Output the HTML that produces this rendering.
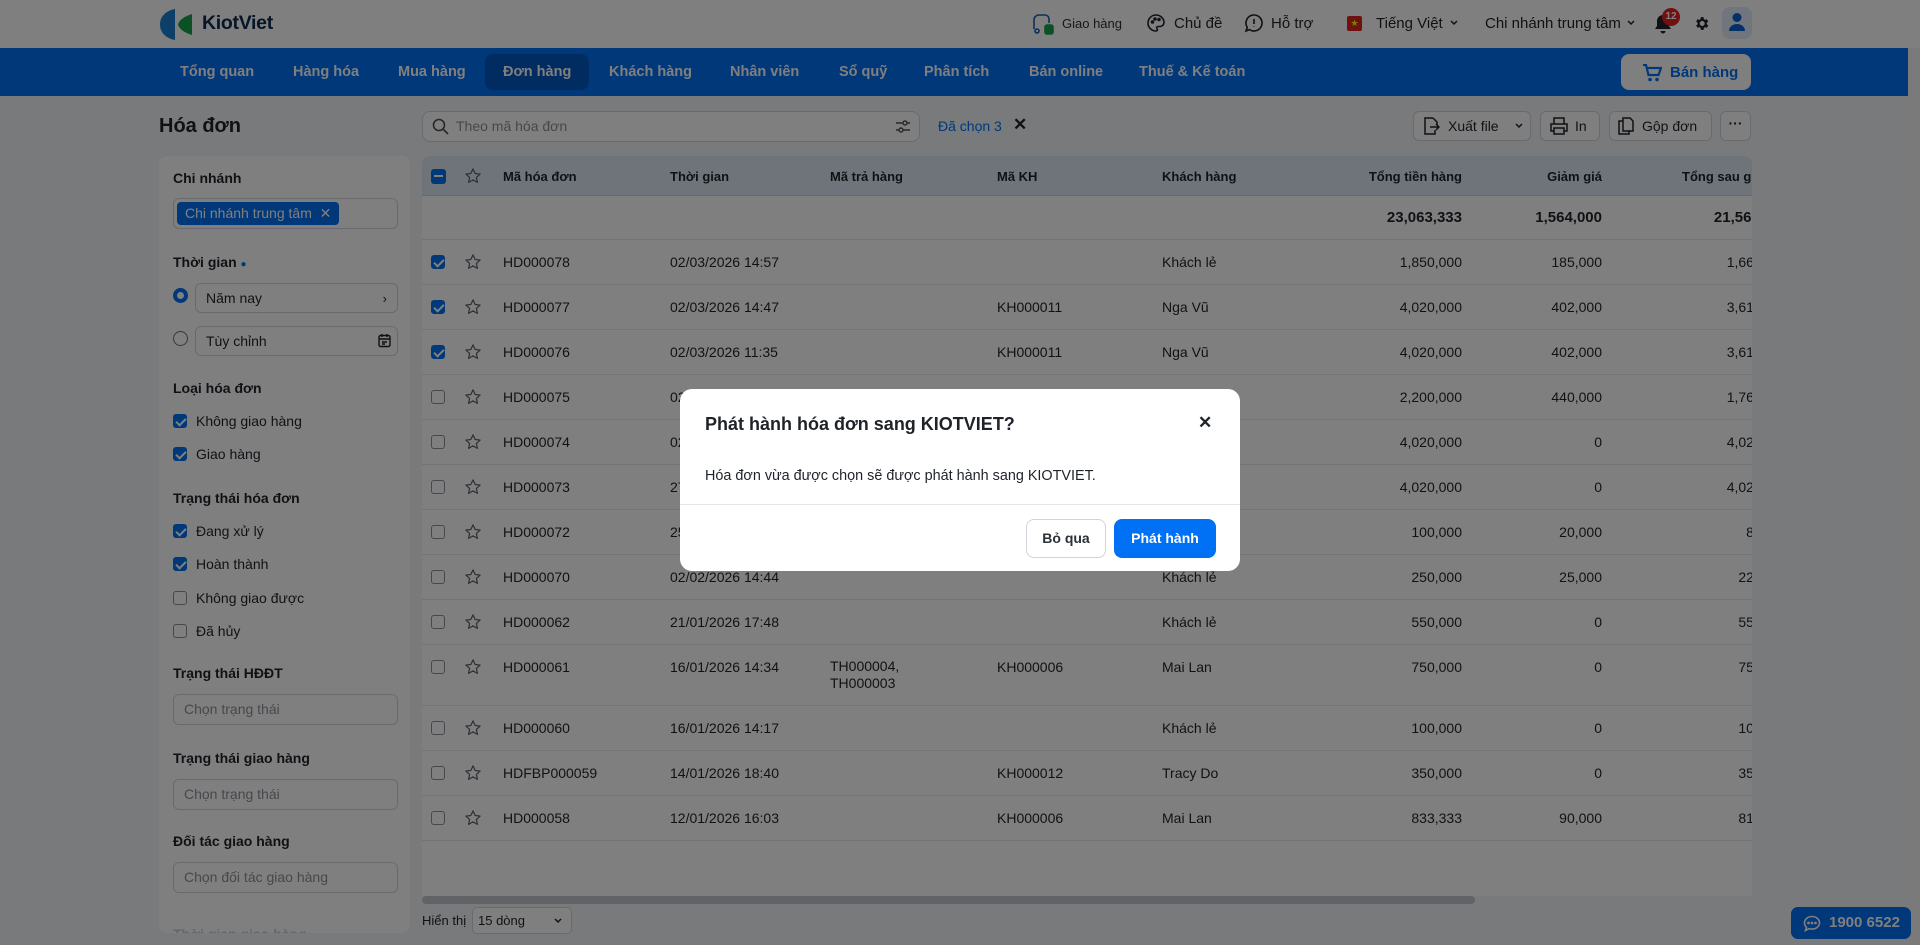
<!DOCTYPE html>
<html><head><meta charset="utf-8">
<style>
*{box-sizing:border-box;margin:0;padding:0}
body{width:1920px;height:945px;overflow:hidden;background:#f3f4f6;font-family:"Liberation Sans",sans-serif;color:#1f2329;position:relative}
.a{position:absolute;white-space:nowrap}
.top{position:absolute;left:0;top:0;width:1920px;height:48px;background:#fff}
.nav{position:absolute;left:0;top:48px;width:1908px;height:48px;background:#0070f4}
.nav .i{position:absolute;top:16px;color:#fff;font-size:14.5px;font-weight:bold}
.sb{position:absolute;left:159px;top:156px;width:251px;height:777px;background:#fff;border-radius:8px;overflow:hidden}
.lbl{font-size:14px;font-weight:bold;color:#1f2329}
.inp{position:absolute;border:1px solid #d0d5dd;border-radius:6px;background:#fff;font-size:14px;color:#1f2329;padding-left:10px;line-height:29px}
.ph{color:#8a9099}
.cb{position:absolute;width:14px;height:14px;border:1.5px solid #8a9099;border-radius:3px;background:#fff}
.cb.on{background:#0070f4;border-color:#0070f4}
.cb.on:after{content:"";position:absolute;left:3.5px;top:0.5px;width:4px;height:8px;border:solid #fff;border-width:0 2px 2px 0;transform:rotate(45deg)}
.ct{position:absolute;font-size:14px;color:#1f2329}
.tbl{position:absolute;left:422px;top:156px;width:1330px;height:740px;background:#fff;overflow:hidden;border-radius:8px 8px 0 0}
.th{position:absolute;left:0;top:0;width:1330px;height:40px;background:#dfe8f5;border-bottom:1px solid #c6d3e6}
.th span{position:absolute;top:13px;font-size:13px;font-weight:bold;color:#1f2329;white-space:nowrap}
.row{position:absolute;left:0;width:1330px;border-bottom:1px solid #e6e8eb;font-size:14px;color:#1f2329}
.row span{position:absolute;top:14px;white-space:nowrap}
.r{text-align:right}
.star{position:absolute;width:18px;height:18px}
.btn{position:absolute;border:1px solid #d0d5dd;border-radius:6px;background:#fff;font-size:14px;height:30px;line-height:28px;color:#1f2329}
.ov{position:absolute;left:0;top:0;width:1920px;height:945px;background:rgba(0,0,0,0.5)}
.modal{position:absolute;left:680px;top:389px;width:560px;height:182px;background:#fff;border-radius:12px}
</style></head><body>

<div class="top">
  <svg class="a" style="left:159px;top:8px" width="36" height="33" viewBox="0 0 36 33"><path d="M16 1 C6 3 1 9 1 16.5 C1 24 6 30 16 32 Z" fill="#1a7fd0"/><path d="M33 6 C26 8 20 12 19 16.5 C20 21 26 25 33 27 Z" fill="#17a34a"/></svg>
  <div class="a" style="left:202px;top:12px;font-size:19.5px;font-weight:bold;color:#0d2b4e;letter-spacing:-0.3px">KiotViet</div>
  <svg class="a" style="left:1031px;top:13px" width="24" height="22" viewBox="0 0 24 22" fill="none" stroke="#1a5fb4" stroke-width="1.6"><path d="M3 16V7a5 5 0 0 1 5-5h6a4 4 0 0 1 4 4v4"/><circle cx="6" cy="18" r="2"/><rect x="14" y="12" width="8" height="9" rx="2" fill="#17a34a" stroke="#17a34a"/></svg>
  <div class="a" style="left:1062px;top:16px;font-size:13px;color:#2b3038">Giao hàng</div>
  <svg class="a" style="left:1146px;top:13px" width="20" height="20" viewBox="0 0 20 20" fill="none" stroke="#1f2329" stroke-width="1.6"><path d="M10 2a8 8 0 0 0 0 16c1.5 0 1.8-1.2 1-2.2-.8-1-.2-2.3 1.2-2.3H14a4 4 0 0 0 4-4C18 5.5 14.4 2 10 2z"/><circle cx="6.5" cy="9" r="1" fill="#1f2329"/><circle cx="9" cy="6" r="1" fill="#1f2329"/><circle cx="13" cy="6.5" r="1" fill="#1f2329"/></svg>
  <div class="a" style="left:1174px;top:15px;font-size:15px">Chủ đề</div>
  <svg class="a" style="left:1244px;top:13px" width="20" height="20" viewBox="0 0 20 20" fill="none" stroke="#1f2329" stroke-width="1.6"><path d="M10 2a8 8 0 1 1-4.5 14.6L2 18l1.3-3.6A8 8 0 0 1 10 2z"/><path d="M10 6v5M10 13.5v.5"/></svg>
  <div class="a" style="left:1271px;top:15px;font-size:15px">Hỗ trợ</div>
  <div class="a" style="left:1347px;top:16px;width:15px;height:15px;background:#da251d;border-radius:2px;color:#ff0;font-size:9px;line-height:15px;text-align:center">★</div>
  <div class="a" style="left:1376px;top:15px;font-size:15px">Tiếng Việt</div>
  <svg class="a" style="left:1450px;top:20px" width="8" height="6" viewBox="0 0 8 6"><path d="M1 1l3 3 3-3" stroke="#1f2329" stroke-width="1.5" fill="none"/></svg>
  <div class="a" style="left:1485px;top:15px;font-size:15px">Chi nhánh trung tâm</div>
  <svg class="a" style="left:1627px;top:20px" width="8" height="6" viewBox="0 0 8 6"><path d="M1 1l3 3 3-3" stroke="#1f2329" stroke-width="1.5" fill="none"/></svg>
  <svg class="a" style="left:1654px;top:13px" width="18" height="22" viewBox="0 0 18 22"><path d="M9 2a6 6 0 0 0-6 6v5l-2 3h16l-2-3V8a6 6 0 0 0-6-6z" fill="#1f2329"/><path d="M6.5 18a2.5 2.5 0 0 0 5 0z" fill="#1f2329"/></svg>
  <div class="a" style="left:1662px;top:8px;width:18px;height:18px;border-radius:9px;background:#e02020;color:#fff;font-size:10px;font-weight:bold;text-align:center;line-height:18px">12</div>
  <svg class="a" style="left:1693px;top:15px" width="17" height="17" viewBox="0 0 24 24"><path fill="#1f2329" d="M19.4 13a7.5 7.5 0 0 0 0-2l2.1-1.6-2-3.5-2.5 1a7.6 7.6 0 0 0-1.7-1L15 3h-4l-.4 2.9a7.6 7.6 0 0 0-1.7 1l-2.5-1-2 3.5L6.6 11a7.5 7.5 0 0 0 0 2l-2.1 1.6 2 3.5 2.5-1a7.6 7.6 0 0 0 1.7 1L11 21h4l.4-2.9a7.6 7.6 0 0 0 1.7-1l2.5 1 2-3.5zM13 15.5a3.5 3.5 0 1 1 0-7 3.5 3.5 0 0 1 0 7z"/></svg>
  <div class="a" style="left:1722px;top:7px;width:30px;height:32px;border-radius:8px;background:#e3ecf9"></div>
  <svg class="a" style="left:1728px;top:12px" width="18" height="20" viewBox="0 0 18 20"><circle cx="9" cy="5.5" r="4.5" fill="#0a5fd0"/><path d="M1 19a8 7 0 0 1 16 0z" fill="#0a5fd0"/></svg>
</div>

<div class="nav">
  <div class="a" style="left:485px;top:6px;width:104px;height:36px;background:#0058c4;border-radius:8px"></div>
  <div class="i" style="left:180px">Tổng quan</div>
  <div class="i" style="left:293px">Hàng hóa</div>
  <div class="i" style="left:398px">Mua hàng</div>
  <div class="i" style="left:503px">Đơn hàng</div>
  <div class="i" style="left:609px">Khách hàng</div>
  <div class="i" style="left:730px">Nhân viên</div>
  <div class="i" style="left:839px">Sổ quỹ</div>
  <div class="i" style="left:924px">Phân tích</div>
  <div class="i" style="left:1029px">Bán online</div>
  <div class="i" style="left:1139px">Thuế &amp; Kế toán</div>
  <div class="a" style="left:1621px;top:6px;width:130px;height:36px;background:#fff;border-radius:8px"></div>
  <svg class="a" style="left:1642px;top:16px" width="20" height="18" viewBox="0 0 20 18"><path d="M1 1h3l2.5 10h10L19 4H5" stroke="#0070f4" stroke-width="2.2" fill="none"/><circle cx="8" cy="15.5" r="1.8" fill="#0070f4"/><circle cx="15" cy="15.5" r="1.8" fill="#0070f4"/></svg>
  <div class="a" style="left:1670px;top:16px;color:#0070f4;font-size:15px;font-weight:bold">Bán hàng</div>
</div>
<div class="a" style="left:1908px;top:48px;width:12px;height:897px;background:#f4f4f4"></div>

<div class="a" style="left:159px;top:115px;font-size:20px;font-weight:bold">Hóa đơn</div>
<div class="a" style="left:422px;top:111px;width:498px;height:31px;border:1px solid #d0d5dd;border-radius:8px;background:#fff"></div>
<svg class="a" style="left:432px;top:118px" width="17" height="17" viewBox="0 0 17 17" fill="none" stroke="#4a5058" stroke-width="1.6"><circle cx="7" cy="7" r="5.5"/><path d="M11 11l5 5"/></svg>
<div class="a" style="left:456px;top:118px;font-size:14px;color:#8a9099">Theo mã hóa đơn</div>
<svg class="a" style="left:895px;top:119px" width="16" height="15" viewBox="0 0 16 15" stroke="#4a5058" stroke-width="1.4" fill="none"><path d="M1 4h14M1 11h14"/><circle cx="10" cy="4" r="2" fill="#fff"/><circle cx="6" cy="11" r="2" fill="#fff"/></svg>
<div class="a" style="left:938px;top:118px;font-size:14px;color:#0070f4">Đã chọn 3</div>
<div class="a" style="left:1013px;top:115px;font-size:17px;font-weight:bold;color:#1f2329">✕</div>

<div class="btn" style="left:1413px;top:111px;width:118px;padding-left:34px">Xuất file</div>
<svg class="a" style="left:1515px;top:123px" width="8" height="6" viewBox="0 0 8 6"><path d="M1 1l3 3 3-3" stroke="#1f2329" stroke-width="1.5" fill="none"/></svg>
<svg class="a" style="left:1422px;top:117px" width="18" height="18" viewBox="0 0 18 18" fill="none" stroke="#1f2329" stroke-width="1.5"><path d="M11 1H3v16h10v-4M11 1l4 4v3M8 10h9M14 7l3 3-3 3"/></svg>
<div class="btn" style="left:1540px;top:111px;width:60px;padding-left:34px">In</div>
<svg class="a" style="left:1550px;top:117px" width="18" height="18" viewBox="0 0 18 18" fill="none" stroke="#1f2329" stroke-width="1.5"><path d="M4 7V1h10v6M4 14H1V7h16v7h-3M4 11h10v6H4z"/></svg>
<div class="btn" style="left:1609px;top:111px;width:103px;padding-left:32px">Gộp đơn</div>
<svg class="a" style="left:1618px;top:117px" width="16" height="18" viewBox="0 0 16 18" fill="none" stroke="#1f2329" stroke-width="1.5"><path d="M5 1h7l3 3v10H5zM5 4H1v13h10v-3"/></svg>
<div class="btn" style="left:1720px;top:111px;width:31px;text-align:center;line-height:22px;font-weight:bold">···</div>

<div class="sb">
  <div class="a lbl" style="left:14px;top:14px">Chi nhánh</div>
  <div class="inp" style="left:14px;top:42px;width:225px;height:31px;padding:0"></div>
  <div class="a" style="left:18px;top:46px;height:23px;padding:0 8px;background:#0070f4;color:#fff;font-size:14px;line-height:23px;border-radius:4px">Chi nhánh trung tâm&nbsp; ✕</div>
  <div class="a lbl" style="left:14px;top:98px">Thời gian <span style="color:#0070f4;font-size:10px">●</span></div>
  <div class="a" style="left:14px;top:132px;width:15px;height:15px;border:4px solid #0070f4;border-radius:50%"></div>
  <div class="inp" style="left:36px;top:127px;width:203px;height:30px">Năm nay<span style="position:absolute;right:10px;font-size:13px">›</span></div>
  <div class="a" style="left:14px;top:175px;width:15px;height:15px;border:1.5px solid #6a7078;border-radius:50%"></div>
  <div class="inp" style="left:36px;top:170px;width:203px;height:30px">Tùy chỉnh</div>
  <svg class="a" style="left:219px;top:177px" width="13" height="15" viewBox="0 0 13 15" fill="none" stroke="#1f2329" stroke-width="1.4"><rect x="1" y="2.5" width="11" height="11" rx="1.5"/><path d="M1 6h11M4 1v3M9 1v3M4 9h5M4 11h3"/></svg>
  <div class="a lbl" style="left:14px;top:224px">Loại hóa đơn</div>
  <div class="cb on" style="left:14px;top:258px"></div><div class="ct" style="left:37px;top:257px">Không giao hàng</div>
  <div class="cb on" style="left:14px;top:291px"></div><div class="ct" style="left:37px;top:290px">Giao hàng</div>
  <div class="a lbl" style="left:14px;top:334px">Trạng thái hóa đơn</div>
  <div class="cb on" style="left:14px;top:368px"></div><div class="ct" style="left:37px;top:367px">Đang xử lý</div>
  <div class="cb on" style="left:14px;top:401px"></div><div class="ct" style="left:37px;top:400px">Hoàn thành</div>
  <div class="cb" style="left:14px;top:435px"></div><div class="ct" style="left:37px;top:434px">Không giao được</div>
  <div class="cb" style="left:14px;top:468px"></div><div class="ct" style="left:37px;top:467px">Đã hủy</div>
  <div class="a lbl" style="left:14px;top:509px">Trạng thái HĐĐT</div>
  <div class="inp ph" style="left:14px;top:538px;width:225px;height:31px">Chọn trạng thái</div>
  <div class="a lbl" style="left:14px;top:594px">Trạng thái giao hàng</div>
  <div class="inp ph" style="left:14px;top:623px;width:225px;height:31px">Chọn trạng thái</div>
  <div class="a lbl" style="left:14px;top:677px">Đối tác giao hàng</div>
  <div class="inp ph" style="left:14px;top:706px;width:225px;height:31px">Chọn đối tác giao hàng</div>
  <div class="a lbl" style="left:14px;top:770px;color:#c8ccd2">Thời gian giao hàng</div>
</div>

<div class="tbl">
  <div class="th">
    <div class="a" style="left:9px;top:13px;width:15px;height:15px;background:#0070f4;border-radius:3px"><div style="position:absolute;left:3px;top:6px;width:9px;height:2px;background:#fff"></div></div>
    <svg class="a" style="left:42px;top:11px" width="18" height="18" viewBox="0 0 24 24"><path d="M12 2.5l2.9 6.2 6.6.7-5 4.5 1.4 6.6L12 17.2l-5.9 3.3 1.4-6.6-5-4.5 6.6-.7z" fill="none" stroke="#5a6068" stroke-width="1.6" stroke-linejoin="round"/></svg>
    <span style="left:81px">Mã hóa đơn</span><span style="left:248px">Thời gian</span><span style="left:408px">Mã trả hàng</span><span style="left:575px">Mã KH</span><span style="left:740px">Khách hàng</span>
    <span style="left:920px;width:120px;text-align:right">Tổng tiền hàng</span><span style="left:1080px;width:100px;text-align:right">Giảm giá</span><span style="left:1260px">Tổng sau giảm giá</span>
  </div>
  <div class="row" style="top:40px;height:44px;font-weight:bold;font-size:15px">
    <span class="r" style="left:940px;width:100px;top:13px">23,063,333</span><span class="r" style="left:1080px;width:100px;top:13px">1,564,000</span><span class="r" style="left:1260px;width:107px;top:13px">21,566,000</span>
  </div>
  <div id="rows"></div>
</div>
<div class="a" style="left:422px;top:896px;width:1053px;height:8px;background:#c4c7cc;border-radius:4px"></div>
<div class="a" style="left:422px;top:913px;font-size:13px">Hiển thị</div>
<div class="a" style="left:472px;top:907px;width:100px;height:27px;border:1px solid #d0d5dd;border-radius:5px;background:#fff;font-size:13px;line-height:25px;padding-left:5px">15 dòng</div>
<svg class="a" style="left:554px;top:918px" width="8" height="6" viewBox="0 0 8 6"><path d="M1 1l3 3 3-3" stroke="#1f2329" stroke-width="1.5" fill="none"/></svg>
<div class="a" style="left:1791px;top:907px;width:120px;height:32px;background:#0070f4;border-radius:7px;color:#fff;font-size:15px;font-weight:bold;line-height:32px;padding-left:38px">1900 6522</div>
<svg class="a" style="left:1803px;top:915px" width="18" height="17" viewBox="0 0 18 17" fill="none" stroke="#fff" stroke-width="1.6"><path d="M9 1.5c4.2 0 7.5 2.8 7.5 6.3S13.2 14 9 14c-1 0-2-.1-2.8-.4L2.5 15.5l1-3.2C2.2 11.2 1.5 9.6 1.5 7.8 1.5 4.3 4.8 1.5 9 1.5z"/><circle cx="5.5" cy="8" r=".6" fill="#fff"/><circle cx="9" cy="8" r=".6" fill="#fff"/><circle cx="12.5" cy="8" r=".6" fill="#fff"/></svg>

<div class="ov"></div>
<div class="modal">
  <div class="a" style="left:25px;top:25px;font-size:18px;font-weight:bold;color:#1f2329">Phát hành hóa đơn sang KIOTVIET?</div>
  <div class="a" style="left:518px;top:24px;font-size:17px;font-weight:bold;color:#1f2329">✕</div>
  <div class="a" style="left:25px;top:79px;font-size:14.4px;color:#1f2329">Hóa đơn vừa được chọn sẽ được phát hành sang KIOTVIET.</div>
  <div class="a" style="left:0;top:115px;width:560px;height:1px;background:#e3e5e8"></div>
  <div class="a" style="left:346px;top:130px;width:80px;height:39px;border:1px solid #d0d5dd;border-radius:8px;text-align:center;line-height:37px;font-size:14px;font-weight:bold;color:#2b3038">Bỏ qua</div>
  <div class="a" style="left:434px;top:130px;width:102px;height:39px;background:#0070f4;border-radius:8px;text-align:center;line-height:39px;font-size:14px;font-weight:bold;color:#fff">Phát hành</div>
</div>

<script>
var d=[
["HD000078","02/03/2026 14:57","","","Khách lẻ","1,850,000","185,000","1,665,000",1],
["HD000077","02/03/2026 14:47","","KH000011","Nga Vũ","4,020,000","402,000","3,618,000",1],
["HD000076","02/03/2026 11:35","","KH000011","Nga Vũ","4,020,000","402,000","3,618,000",1],
["HD000075","02/03/2026 10:20","","","Khách lẻ","2,200,000","440,000","1,760,000",0],
["HD000074","02/03/2026 09:12","","","Khách lẻ","4,020,000","0","4,020,000",0],
["HD000073","27/02/2026 16:30","","","Khách lẻ","4,020,000","0","4,020,000",0],
["HD000072","25/02/2026 10:05","","","Khách lẻ","100,000","20,000","80,000",0],
["HD000070","02/02/2026 14:44","","","Khách lẻ","250,000","25,000","225,000",0],
["HD000062","21/01/2026 17:48","","","Khách lẻ","550,000","0","550,000",0],
["HD000061","16/01/2026 14:34","TH000004,<br>TH000003","KH000006","Mai Lan","750,000","0","750,000",0],
["HD000060","16/01/2026 14:17","","","Khách lẻ","100,000","0","100,000",0],
["HDFBP000059","14/01/2026 18:40","","KH000012","Tracy Do","350,000","0","350,000",0],
["HD000058","12/01/2026 16:03","","KH000006","Mai Lan","833,333","90,000","810,000",0]];
var h="",y=84;
var st='<svg class="star" style="left:42px;top:13px" viewBox="0 0 24 24"><path d="M12 2.5l2.9 6.2 6.6.7-5 4.5 1.4 6.6L12 17.2l-5.9 3.3 1.4-6.6-5-4.5 6.6-.7z" fill="none" stroke="#5a6068" stroke-width="1.6" stroke-linejoin="round"/></svg>';
d.forEach(function(r,i){var ht=(i==9)?61:45;
h+='<div class="row" style="top:'+y+'px;height:'+ht+'px"><div class="cb'+(r[8]?' on':'')+'" style="left:9px;top:15px"></div>'+st+
'<span style="left:81px">'+r[0]+'</span><span style="left:248px">'+r[1]+'</span><span style="left:408px;line-height:17px;top:13px">'+r[2]+'</span><span style="left:575px">'+r[3]+'</span><span style="left:740px">'+r[4]+'</span><span class="r" style="left:940px;width:100px">'+r[5]+'</span><span class="r" style="left:1080px;width:100px">'+r[6]+'</span><span class="r" style="left:1260px;width:107px">'+r[7]+'</span></div>';y+=ht;});
document.getElementById("rows").innerHTML=h;
</script>
</body></html>
